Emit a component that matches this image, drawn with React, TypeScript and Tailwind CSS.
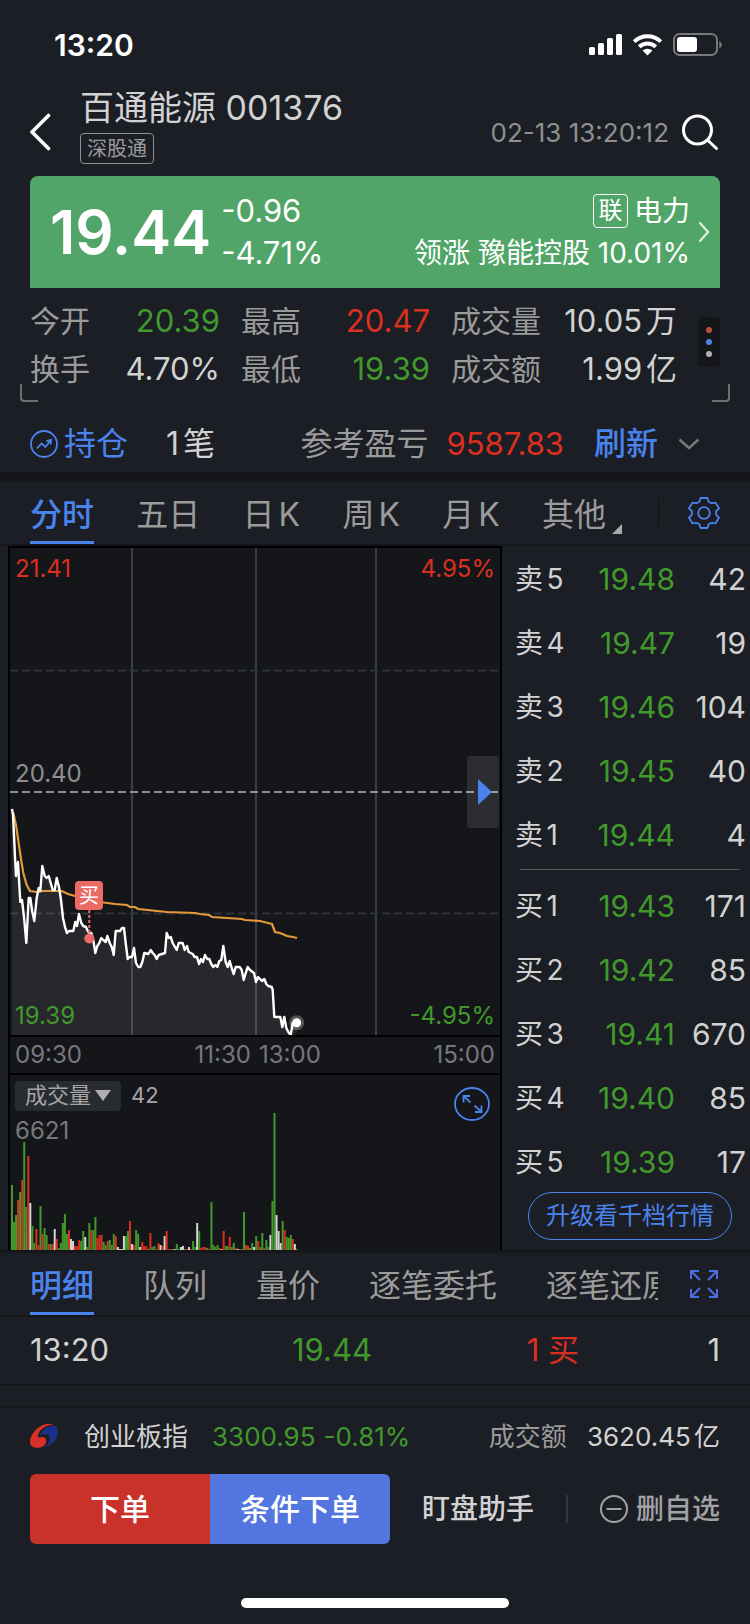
import { clsx } from "clsx";

const volumes = [
    65, 28, 35, 50, 58, 70, 108, 43, 94, 47, 24, 7, 21, 5, 44, 16, 22, 15, 6, 6,
    6, 21, 11, 2, 7, 27, 36, 16, 20, 11, 9, 4, 4, 10, 9, 19, 13, 3, 27, 20,
    20, 33, 12, 15, 15, 8, 5, 9, 10, 5, 16, 14, 3, 1, 1, 14, 14, 19, 29, 6,
    5, 20, 16, 3, 8, 4, 4, 1, 17, 3, 4, 1, 7, 5, 4, 14, 19, 1, 1, 1,
    1, 6, 1, 3, 4, 1, 1, 3, 1, 9, 3, 27, 19, 2, 3, 3, 2, 1, 48, 5,
    3, 5, 2, 1, 19, 4, 4, 13, 3, 7, 2, 1, 1, 1, 38, 5, 4, 2, 7, 3,
    14, 9, 3, 17, 2, 10, 3, 15, 49, 137, 35, 19, 7, 29, 20, 13, 12, 15, 11, 6,
    1,
];

// g = down, r = up, w = flat, one letter per minute
const volumeTrend =
    "gggrgrggrwggrrgrggrg" +
    "rwrgggggrwwrrrggwggr" +
    "ggrrrggrgggrwwwwggrw" +
    "rggwrrrgrgggrwrwrrgr" +
    "wggwwgrwrggwgrrrgrgg" +
    "ggrwrggrggrwrggrrggw" +
    "grggrggwggwwwgrgggrw" +
    "g";

const trendFill: Record<string, string> = { g: "#41992b", r: "#db2f20", w: "#d5d5d5" };

const priceLine =
    "2,261 3,267 4,287 5,309 6,328 8,314 10.3,354 12,352 14,369 16.3,395 18.7,350 20.3,350 22.3,364 24.3,373 26.7,350 28.7,340 30.3,343 32.3,318 34.7,328 36.7,330 38.7,328 40.7,335 42.7,342 44.7,342 46.7,330 49,339 51,352 53,370 55,379 57,385 59,383 63.3,383 65.3,374 67,378 69,366 71.3,375 73.3,378 76,379 77.3,382 79.3,385 81.3,385 83.3,392 85.3,405 87.3,398 89.3,395 91.3,390 93.3,392 95.7,394 97.3,388 99.7,395 101.7,399 103.7,407 105.7,383 110,383 112,380 114,380 115.7,395 117.7,411 119.7,409 122,409 124,400 126,415 128.3,419 130.3,419 132.3,414 134.3,405 138.3,406 140.7,402 142.7,405 144.7,407 146.7,411 148.7,407 155,405 156.7,385 158.7,390 160.7,389 162.7,395 166.7,402 168.7,395 172.7,395 174.7,402 177,398 178.7,404 182.7,406 184.7,409 187,409 189,416 191,411 193,414 195,407 197.3,411 199.3,411 201.3,416 203.3,419 205.3,417 207.3,419 209.3,413 211.3,412 213.3,398 215.7,414 217.7,419 219.7,413 221.7,420 223.7,426 225.7,419 229.7,419 231.7,422 233.7,432 235.7,425 237.7,419 240,422 244,425 246,434 248,429 252,433 254.3,431 256.3,436 258.3,438 261.7,439 262.7,442 264.3,469 270.3,469 272.3,479 274.3,469 276.3,480 278.3,484 280.7,487 282.7,475 286.7,475";

const averageLine =
    "3.3,265 6,277 10.7,309 13.3,325 16.7,337 20,343 26.7,344 33,343 51.7,343 58,346 65,348 90,354 105,356 117,357 120,359 125,359 128,361 157,364 185,365 190,366 199,367 202,369 232,371 235,372 250,373 258,375 262,376 265,384 270,385 277,388 283,389 287,390";

const quotes = [
    { label: "今开", value: "20.39", color: "text-[#41992b]" },
    { label: "最高", value: "20.47", color: "text-[#db2f20]" },
    { label: "成交量", value: "10.05万", color: "text-[#d2d2d2]" },
    { label: "换手", value: "4.70%", color: "text-[#d2d2d2]" },
    { label: "最低", value: "19.39", color: "text-[#41992b]" },
    { label: "成交额", value: "1.99亿", color: "text-[#d2d2d2]" },
];

const periods = ["分时", "五日", "日K", "周K", "月K", "其他"];
const detailTabs = ["明细", "队列", "量价", "逐笔委托", "逐笔还原"];

const asks = [
    ["卖5", "19.48", "42"],
    ["卖4", "19.47", "19"],
    ["卖3", "19.46", "104"],
    ["卖2", "19.45", "40"],
    ["卖1", "19.44", "4"],
];

const bids = [
    ["买1", "19.43", "171"],
    ["买2", "19.42", "85"],
    ["买3", "19.41", "670"],
    ["买4", "19.40", "85"],
    ["买5", "19.39", "17"],
];

function StatusBar() {
    return (
        <div className="flex h-[88px] items-center justify-between pl-[54px] pr-7 pt-0.5">
            <span className="text-[30px] font-semibold leading-9 text-white">13:20</span>
            <svg width="134" height="24" viewBox="0 0 134 24" fill="#fff">
                <rect x="1" y="14" width="6" height="8" rx="1.5" />
                <rect x="10" y="10" width="6" height="12" rx="1.5" />
                <rect x="19" y="5" width="6" height="17" rx="1.5" />
                <rect x="28" y="1" width="6" height="21" rx="1.5" />
                <g fill="none" stroke="#fff" strokeWidth="4">
                    <path d="M46.2 8.6a19.5 19.5 0 0 1 26.6 0" />
                    <path d="M51.2 13.8a12.2 12.2 0 0 1 16.6 0" />
                </g>
                <path d="M54.6 17.6a7.2 7.2 0 0 1 9.8 0L59.5 22.5z" />
                <rect x="86" y="1" width="43" height="21" rx="5.5" fill="none" stroke="#77797e" strokeWidth="2" />
                <rect x="89" y="4" width="20" height="15" rx="3" />
                <path d="M131.3 8v7.500c1.600-.8 2.500-2.200 2.500-3.700s-.9-3-2.500-3.800z" fill="#77797e" />
            </svg>
        </div>
    );
}

function Header() {
    return (
        <header className="flex h-[88px] items-center pl-[30px] pr-[31px]">
            <button aria-label="返回" className="w-[50px]">
                <svg width="22" height="38" viewBox="0 0 22 38" fill="none" stroke="#fff" strokeWidth="3.600" strokeLinecap="round" strokeLinejoin="round">
                    <path d="M18.500 2.500 2 19l16.500 16.500" />
                </svg>
            </button>
            <div className="flex-1 self-start">
                <h1 className="text-[34px] leading-10 text-[#d2d2d2]">百通能源 001376</h1>
                <span className="mt-[5px] flex h-[31px] w-fit items-center rounded-sm border border-[#8f9094] px-1.5 text-xl text-[#9b9b9b]">
                    深股通
                </span>
            </div>
            <time className="text-[26px] text-[#8f8f90]">02-13 13:20:12</time>
            <button aria-label="搜索" className="ml-3">
                <svg width="38" height="38" viewBox="0 0 38 38" fill="none" stroke="#fff" strokeWidth="3" strokeLinecap="round">
                    <circle cx="16.500" cy="17" r="14" />
                    <path d="m27 27.500 8.500 8" />
                </svg>
            </button>
        </header>
    );
}

function PriceBanner() {
    return (
        <section className="mx-[30px] flex h-28 items-center rounded-t-lg bg-[#51a568] pl-5 pr-2.5 text-white">
            <strong className="text-[60px] font-semibold">19.44</strong>
            <div className="ml-2.5 text-[31px] leading-[42px]">
                <div>-0.96</div>
                <div>-4.71%</div>
            </div>
            <div className="ml-auto text-right text-[28px] leading-[42px]">
                <div className="flex items-center justify-end gap-1.5">
                    <span className="flex h-[34px] w-[35px] items-center justify-center rounded-sm border border-white text-2xl">
                        联
                    </span>
                    电力
                </div>
                <div>领涨 豫能控股 10.01%</div>
            </div>
            <svg className="ml-2" width="12" height="22" viewBox="0 0 12 22" fill="none" stroke="#e2f1e6" strokeWidth="2.200" strokeLinecap="round">
                <path d="m2 2 8 9-8 9" />
            </svg>
        </section>
    );
}

function Quotes() {
    return (
        <section className="relative flex gap-[21px] px-[30px] pb-[23px] pt-[9px]">
            <dl className="grid flex-1 grid-cols-[190fr_189fr_226fr] gap-x-[21px] text-[30px] leading-[48px]">
                {quotes.map((q) => (
                    <div key={q.label} className="flex justify-between">
                        <dt className="text-[#9b9b9b]">{q.label}</dt>
                        <dd className={clsx("text-[31px]", q.color)}>{q.value}</dd>
                    </div>
                ))}
            </dl>
            <button aria-label="更多" className="mt-5 flex h-[50px] w-[22px] flex-col items-center justify-center gap-1.5 rounded bg-[#15161a]">
                <i className="size-1.5 rounded-full bg-[#c24f3e]" />
                <i className="size-1.5 rounded-full bg-[#4a83ec]" />
                <i className="size-1.5 rounded-full bg-[#b0b0b2]" />
            </button>
            <span className="absolute bottom-[14px] left-5 size-[18px] rounded-bl-sm border-b-2 border-l-2 border-[#6d6f74]" />
            <span className="absolute bottom-[14px] right-5 size-[18px] rounded-br-sm border-b-2 border-r-2 border-[#6d6f74]" />
        </section>
    );
}

function Position() {
    return (
        <section className="flex h-14 items-center pl-[30px] pr-[50px] text-[32px] text-[#9b9b9b]">
            <svg width="28" height="28" viewBox="0 0 28 28" fill="none" stroke="#4a83ec" strokeWidth="1.800">
                <circle cx="14" cy="14" r="13" />
                <path d="m7 18.500 4.500-5 4 3.500 5-6.500M16.500 11l4.500-1-.3 4.500" />
            </svg>
            <span className="ml-1.5 text-[#4a83ec]">持仓</span>
            <span className="ml-[38px] text-[#d2d2d2]">1笔</span>
            <span className="ml-auto">参考盈亏</span>
            <span className="ml-[18px] text-[31px] text-[#db2f20]">9587.83</span>
            <button className="ml-[30px] font-medium text-[#4a83ec]">刷新</button>
            <button aria-label="展开" className="ml-5">
                <svg width="22" height="12" viewBox="0 0 22 12" fill="none" stroke="#77787c" strokeWidth="2.500">
                    <path d="m1.500 1.500 9.500 8.500 9.500-8.500" />
                </svg>
            </button>
        </section>
    );
}

function Tab({ label, active }: { label: string; active: boolean }) {
    return (
        <button
            className={clsx(
                "h-full shrink-0 border-b-[3px] pt-1.5 text-[32px]",
                active ? "border-[#4a83ec] font-medium text-[#4a83ec]" : "border-transparent text-[#9b9b9b]"
            )}
        >
            {label}
        </button>
    );
}

function PeriodTabs() {
    return (
        <nav className="flex h-16 items-center border-b-2 border-[#15161a] px-[30px]">
            <div className="flex h-full flex-1 justify-between">
                {periods.map((p, i) => (
                    <Tab key={p} label={p} active={i === 0} />
                ))}
            </div>
            <svg className="ml-1.5 mt-8" width="10" height="10" viewBox="0 0 10 10" fill="#a9a9a9">
                <path d="M10 0v10H0z" />
            </svg>
            <span className="ml-9 mr-[29px] h-7 w-px bg-[#121317]" />
            <button aria-label="设置">
                <svg width="32" height="32" viewBox="0 0 32 32" fill="none" stroke="#4a83ec" strokeWidth="1.800" strokeLinejoin="round">
                    <path d="M12.600 1h6.800l1.200 3.600q1.400 1.400 3.300 1.600l3.700-.6 3.400 5.700-2.700 2.700q-.8 2 0 4l2.700 2.700-3.400 5.700-3.700-.6q-1.900.2-3.300 1.600L19.400 31h-6.800l-1.200-3.600q-1.400-1.400-3.300-1.600l-3.700.6L1 20.700 3.700 18q.8-2 0-4L1 11.300l3.400-5.700 3.700.6q1.900-.2 3.300-1.600z" />
                    <circle cx="16" cy="16" r="5.800" />
                </svg>
            </button>
        </nav>
    );
}

function PriceChart() {
    return (
        <div className="relative border-t-2 border-black text-2xl leading-7">
            <svg className="block h-auto w-full" viewBox="0 0 490 487" fill="none">
                <g stroke="#3a3e4a" strokeWidth="2">
                    <path d="M122 0v487M246 0v487M366 0v487" />
                    <path d="M0 122.500h490M0 365.500h490" strokeDasharray="8 4" stroke="#30323e" />
                </g>
                <path d="M0 244h490" strokeDasharray="8 4" stroke="#8d8e90" strokeWidth="2" />
                <polygon points={`2,487 ${priceLine} 286.7,487`} fill="#fff" fillOpacity="0.08" />
                <polyline points={averageLine} stroke="#e59a3a" strokeWidth="2.200" />
                <polyline points={priceLine} stroke="#fff" strokeWidth="2.400" strokeLinejoin="round" />
                <circle cx="286.700" cy="474.700" r="7.500" fill="#fff" fillOpacity="0.25" />
                <circle cx="286.700" cy="474.700" r="4.500" fill="#fff" />
                <path d="M79.300 362v24" stroke="#ec6a66" strokeWidth="2" strokeDasharray="3 2" />
                <circle cx="79.300" cy="390.500" r="5" fill="#ec6a66" />
                <rect x="65" y="333" width="28" height="29" rx="4" fill="#ec6a66" />
                <text x="79" y="355" fill="#fff" fontSize="20" textAnchor="middle">买</text>
            </svg>
            <span className="absolute left-[5px] top-[7px] text-[#db2f20]">21.41</span>
            <span className="absolute right-[5px] top-[7px] text-[#db2f20]">4.95%</span>
            <span className="absolute bottom-[247px] left-[5px] text-[#8f8f90]">20.40</span>
            <span className="absolute bottom-[5px] left-[5px] text-[#41992b]">19.39</span>
            <span className="absolute bottom-[5px] right-[5px] text-[#41992b]">-4.95%</span>
            <button aria-label="收起盘口" className="absolute right-px top-[208px] flex h-[72px] w-8 items-center justify-center rounded bg-white/10 pl-1">
                <svg width="14" height="26" viewBox="0 0 14 26" fill="#4a83ec">
                    <path d="m0 0 14 13L0 26z" />
                </svg>
            </button>
        </div>
    );
}

function VolumeChart() {
    return (
        <div className="relative border-t-2 border-black">
            <svg className="block h-auto w-full" viewBox="0 0 490 175">
                {volumes.map((v, i) => (
                    <rect key={i} x={1 + i * 2.035} y={175 - v} width="2" height={v} fill={trendFill[volumeTrend[i]]} />
                ))}
            </svg>
            <div className="absolute left-[5px] top-1 flex items-center gap-2.5 text-[22px] text-[#a5a5a6]">
                <button className="flex h-[30px] items-center gap-1 rounded bg-[#282b30] px-2.5">
                    成交量
                    <svg width="16" height="11" viewBox="0 0 16 11" fill="#b0b0b0">
                        <path d="M0 0h16L8 11z" />
                    </svg>
                </button>
                <span>42</span>
            </div>
            <span className="absolute left-[5px] top-[42px] text-2xl leading-7 text-[#77787c]">6621</span>
            <button aria-label="放大" className="absolute right-2.5 top-3">
                <svg width="36" height="34" viewBox="0 0 36 34" fill="none" stroke="#4a83ec" strokeWidth="1.800">
                    <ellipse cx="18" cy="17" rx="17" ry="16" />
                    <path d="M9.500 15.500V9H16M10 9.500l6.500 6M27.500 18.500V25H21M27 24.500l-6.500-6" />
                </svg>
            </button>
        </div>
    );
}

function OrderTable({ rows }: { rows: string[][] }) {
    return (
        <table className="w-full text-[28px] text-[#d2d2d2]">
            <tbody>
                {rows.map(([side, price, amount]) => (
                    <tr key={side} className="h-16">
                        <td className="w-16 whitespace-nowrap">{side}</td>
                        <td className="text-right text-[30px] text-[#41992b]">{price}</td>
                        <td className="w-[71px] text-right text-[30px]">{amount}</td>
                    </tr>
                ))}
            </tbody>
        </table>
    );
}

function OrderBook() {
    return (
        <aside className="flex w-[248px] flex-col pl-[13px] pr-1 pt-px">
            <OrderTable rows={asks} />
            <hr className="mb-1 ml-[5px] mr-1.5 mt-0.5 border-[#55575d]" />
            <OrderTable rows={bids} />
            <button className="-mt-0.5 ml-[13px] mr-3.5 h-12 rounded-full border border-[#4a83ec] text-2xl text-[#4a83ec]">
                升级看千档行情
            </button>
        </aside>
    );
}

function DetailTabs() {
    return (
        <nav className="flex h-[67px] items-center border-b-2 border-t-[3px] border-[#15161a] px-[30px]">
            <div className="flex h-full flex-1 gap-[49px] overflow-hidden whitespace-nowrap">
                {detailTabs.map((t, i) => (
                    <Tab key={t} label={t} active={i === 0} />
                ))}
            </div>
            <button aria-label="全屏" className="ml-8 mr-0.5">
                <svg width="28" height="28" viewBox="0 0 28 28" fill="none" stroke="#4f6fe0" strokeWidth="2">
                    <path d="M1 9V1h8M1 1l9 9M19 1h8v8M27 1l-9 9M1 19v8h8M1 27l9-9M19 27h8v-8M27 27l-9-9" />
                </svg>
            </button>
        </nav>
    );
}

function IndexBar() {
    return (
        <div className="flex h-[58px] items-center border-t-2 border-[#15161a] px-[30px] text-[26px]">
            <svg width="28" height="26" viewBox="0 0 28 26">
                <path d="M23 1.500C17-.8 8.500 3 4 9c-3.500 4.700-5 9.500-3.500 12.500C2 24.500 6 25.300 10 24.600c4-.8 6.300-3.600 6.200-7-.1-3.200-3.200-4-5.600-3.400-1.600.4-3 .2-2.600-2C8.800 7.500 15 2.500 23 1.500z" fill="#d9302a" />
                <path d="M24.500 2.500C27 3.500 28.200 7 27.600 11 26.500 17.500 20 23.500 13.500 24.800c4.500-2.500 6.500-6 6.200-9.500-.3-2.800-2.200-4.300-5-4.200-1.500 0-3.300.2-4.900 1C12 7.500 17.500 2.800 24.500 2.500z" fill="#19318c" />
            </svg>
            <span className="ml-[26px] text-[#d2d2d2]">创业板指</span>
            <span className="ml-6 text-[#41992b]">3300.95</span>
            <span className="ml-2 text-[#41992b]">-0.81%</span>
            <span className="ml-auto text-[#9b9b9b]">成交额</span>
            <span className="ml-5 text-[#d2d2d2]">3620.45亿</span>
        </div>
    );
}

function ActionBar() {
    return (
        <div className="mt-2.5 flex h-[70px] items-center px-[30px]">
            <div className="flex h-full w-[360px] overflow-hidden rounded-md text-[30px] font-medium text-white">
                <button className="flex-1 bg-[#c9322a]">下单</button>
                <button className="flex-1 bg-[#5275e0]">条件下单</button>
            </div>
            <div className="flex flex-1 items-center justify-between pl-8 text-[28px] font-medium">
                <button className="text-[#d2d2d2]">盯盘助手</button>
                <span className="h-7 w-0.5 bg-[#33363f]" />
                <button className="flex items-center gap-2 text-[#a2a2a4]">
                    <svg width="28" height="28" viewBox="0 0 28 28" fill="none" stroke="#a2a2a4" strokeWidth="2">
                        <circle cx="14" cy="14" r="13" />
                        <path d="M6.500 14h15" />
                    </svg>
                    删自选
                </button>
            </div>
        </div>
    );
}

export default function App() {
    return (
        <main className="flex min-h-screen flex-col bg-[#1b1e25] font-['Inter','Noto_Sans_CJK_SC',sans-serif] [text-autospace:normal]">
            <StatusBar />
            <Header />
            <PriceBanner />
            <Quotes />
            <Position />
            <div className="h-2.5 bg-[#15161a]" />
            <PeriodTabs />
            <div className="flex">
                <div className="flex-1 pl-2">
                    <div className="border-x-2 border-black bg-[#15161a]">
                        <PriceChart />
                        <div className="flex h-[38px] items-center border-t-2 border-black px-[5px] text-2xl text-[#77787c]">
                            <span>09:30</span>
                            <span className="ml-auto">11:30</span>
                            <span className="ml-2 mr-auto">13:00</span>
                            <span>15:00</span>
                        </div>
                        <VolumeChart />
                    </div>
                </div>
                <OrderBook />
            </div>
            <DetailTabs />
            <div className="border-b border-[#15161a] px-[30px]">
                <table className="w-full table-fixed text-[31px] text-[#d2d2d2]">
                    <tbody>
                        <tr className="h-[67px]">
                            <td className="w-1/4">13:20</td>
                            <td className="w-1/4 pr-[3px] text-right text-[#41992b]">19.44</td>
                            <td className="w-[30%] pr-[3px] text-right text-[#db2f20]">1 买</td>
                            <td className="text-right">1</td>
                        </tr>
                    </tbody>
                </table>
            </div>
            <div className="h-[21px]" />
            <IndexBar />
            <ActionBar />
            <div className="mx-auto mb-4 mt-auto h-2.5 w-[268px] rounded-full bg-white" />
        </main>
    );
}
